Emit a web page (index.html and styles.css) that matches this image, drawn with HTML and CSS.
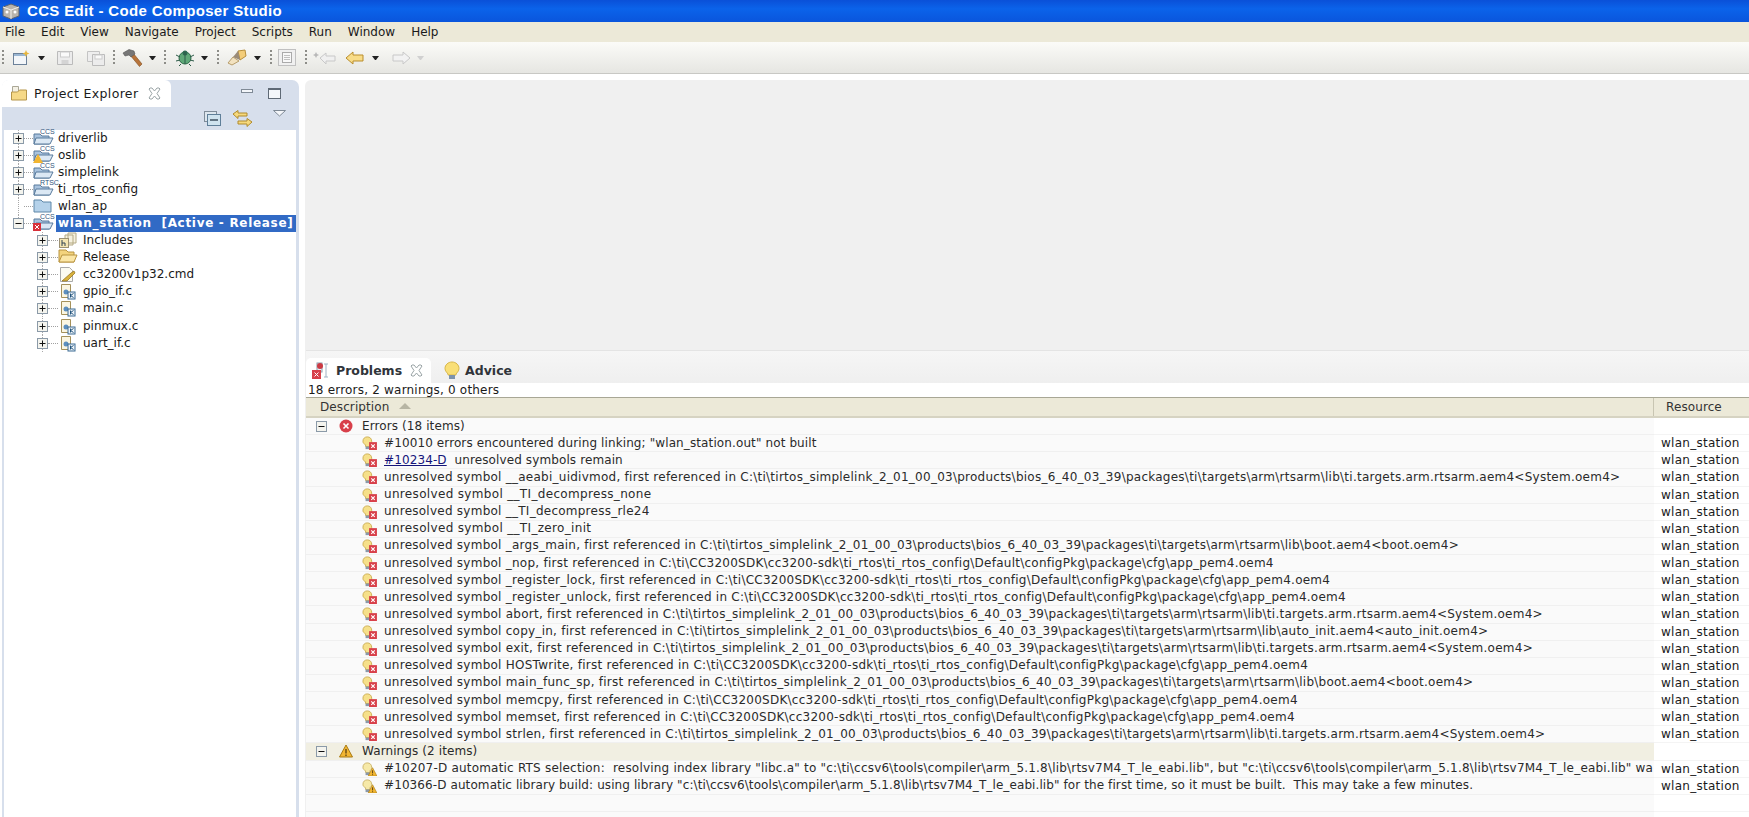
FILE: index.html
```html
<!DOCTYPE html>
<html lang="en">
<head>
<meta charset="utf-8">
<title>CCS Edit - Code Composer Studio</title>
<link rel="stylesheet" href="styles.css">
</head>
<body>
<svg class="defs" width="0" height="0" aria-hidden="true">
  <defs>
    <symbol id="bulb-err" viewBox="0 0 17 16">
      <path d="M6 1c3 0 5 2 5 5 0 2-1 3-2 4v2H4v-2C2 9 1 8 1 6c0-3 2-5 5-5z" fill="#f6e08a" stroke="#c9a94c"/>
      <rect x="4" y="12" width="5" height="3" fill="#8a98a8"/>
      <rect x="8" y="7" width="9" height="9" fill="#d8404a"/>
      <path d="M10.500 9.500l4 4m0-4l-4 4" stroke="#fff" stroke-width="1.300"/>
    </symbol>
    <symbol id="bulb-warn" viewBox="0 0 17 16">
      <path d="M6 1c3 0 5 2 5 5 0 2-1 3-2 4v2H4v-2C2 9 1 8 1 6c0-3 2-5 5-5z" fill="#f6e9a8" stroke="#c9b060"/>
      <rect x="4" y="12" width="5" height="3" fill="#8a98a8"/>
      <path d="M12 6.500l5 9.500H7z" fill="#f2b632" stroke="#a97a12" stroke-width=".7"/>
      <path d="M12 9.500v3.500m0 1v1" stroke="#4a3410" stroke-width="1"/>
    </symbol>
    <symbol id="toggle-plus" viewBox="0 0 11 11">
      <rect x=".5" y=".5" width="10" height="10" fill="#f4f4ee" stroke="#8b9aa8"/>
      <path d="M2.500 5.500h6M5.500 2.500v6" stroke="#111"/>
    </symbol>
    <symbol id="toggle-minus" viewBox="0 0 11 11">
      <rect x=".5" y=".5" width="10" height="10" fill="#f4f4ee" stroke="#8b9aa8"/>
      <path d="M2.500 5.500h6" stroke="#111"/>
    </symbol>
    <symbol id="project" viewBox="0 2 22 17">
      <path d="M1 6h6l2 2h7v8H1z" fill="#a9c3de" stroke="#587a9c"/>
      <path d="M3 10h17l-3 6H1z" fill="#dbe8f4" stroke="#587a9c"/>
    </symbol>
    <symbol id="file-c" viewBox="0 0 16 17">
      <path d="M1.500 1.500h9v13h-9z" fill="#fbf6e2" stroke="#a5915a"/>
      <circle cx="6" cy="9" r="2.500" fill="#5d8fbf"/>
      <rect x="8" y="9" width="7" height="7" fill="#eef3f8" stroke="#3a6b94"/>
      <path d="M10.500 10.500v4m3-4l-3 2 3 2" stroke="#24557d" fill="none"/>
    </symbol>
    <symbol id="close-x" viewBox="0 0 13 13">
      <path d="M2 1l2 0 2.500 3L9 1h2l1 1-3 4.500 3 4.500-1 1H9L6.500 9 4 12H2l-1-1 3-4.500L1 2z" fill="#fff" stroke="#9aa4a6"/>
    </symbol>
  </defs>
</svg>

<header class="titlebar">
  <svg class="app-icon" width="20" height="17" viewBox="0 0 20 17"><path d="M10 1l8 3v9l-8 3-8-3V4z" fill="#b9b4ac" stroke="#5b6270"/><path d="M2 4l8 3 8-3M10 7v9" stroke="#f2f0ea" fill="none"/><circle cx="6" cy="9" r="1.500" fill="#fff"/><circle cx="14" cy="9" r="1.500" fill="#fff"/></svg>
  <span>CCS Edit - Code Composer Studio</span>
</header>

<nav class="menubar">
  <span>File</span><span>Edit</span><span>View</span><span>Navigate</span><span>Project</span><span>Scripts</span><span>Run</span><span>Window</span><span>Help</span>
</nav>

<div class="toolbar">
  <i class="grip"></i>
  <svg class="ti t-new" width="18" height="16" viewBox="0 0 18 16"><rect x="1.500" y="3.500" width="13" height="11" fill="#f3f6f9" stroke="#6c8199"/><rect x="2" y="4" width="12" height="2" fill="#9ab7d3"/><path d="M14 0l1 2.500 2.500 1-2.500 1-1 2.500-1-2.500-2.500-1 2.500-1z" fill="#e7b63c"/></svg>
  <i class="caret c-new"></i>
  <svg class="ti t-save" width="18" height="16" viewBox="0 0 18 16"><path d="M1.500 1.500h15v13h-15z" fill="#ececec" stroke="#bbb"/><rect x="4.500" y="2" width="9" height="5" fill="#fafafa" stroke="#ccc"/><rect x="5.500" y="10" width="7" height="4" fill="#d4d4d4"/></svg>
  <svg class="ti t-saveall" width="20" height="16" viewBox="0 0 20 16"><path d="M1.500 1.500h12v10h-12z" fill="#eee" stroke="#c4c4c4"/><path d="M6.500 4.500h12v11h-12z" fill="#ececec" stroke="#bbb"/><rect x="9" y="5" width="7" height="4" fill="#fafafa" stroke="#ccc"/></svg>
  <i class="grip g-a"></i>
  <svg class="ti t-7" width="21" height="18" viewBox="0 0 21 18"><path d="M8 6l3-2 9 11-2.500 2.500z" fill="#b8743a" stroke="#7e4c20" stroke-width=".6"/><path d="M1 4l6-3.500 5 1.500 1 3-4 3-2-2-4 1z" fill="#777" stroke="#555" stroke-width=".6"/></svg>
  <i class="caret"></i>
  <i class="grip g-b"></i>
  <svg class="ti t-9" width="19" height="17" viewBox="0 0 19 17"><ellipse cx="10" cy="9" rx="6" ry="6" fill="#5fa878" stroke="#2d6b48"/><circle cx="10" cy="4" r="2.500" fill="#2e6a52"/><path d="M1 6l4 2M1 12l4-1M19 6l-4 2M19 12l-4-1M6 15l-2 2M14 15l2 2M10 3v12" stroke="#2d5b48" fill="none"/></svg>
  <i class="caret c-7"></i>
  <i class="grip g-c"></i>
  <svg class="ti t-7" width="21" height="17" viewBox="0 0 21 17"><path d="M12 2l7-1 1 6-6 4z" fill="#f3cd7a" stroke="#b78f3d"/><path d="M2 14l5-6 6 4-7 4z" fill="#f2e2c0" stroke="#b79d6a"/><path d="M7 8l5-6 2 9z" fill="#9a8b78"/></svg>
  <i class="caret c-7"></i>
  <i class="grip g-c"></i>
  <svg class="ti t-6" width="18" height="17" viewBox="0 0 18 17"><rect x=".5" y=".5" width="17" height="16" fill="#f0f0f0" stroke="#c0c0c0"/><rect x="4.500" y="3.500" width="9" height="10" fill="#f8f8f8" stroke="#aaa"/><path d="M6 6.500h6M6 8.500h6M6 10.500h6" stroke="#c0c0c0"/></svg>
  <i class="grip g-c"></i>
  <svg class="ti t-6" width="24" height="14" viewBox="0 0 24 14"><path d="M7 7l6-5v3h9v5h-9v3z" fill="#f0f0f0" stroke="#c8c8c8"/><path d="M3 1l1 2 2 1-2 1-1 2-1-2-2-1 2-1z" fill="#b8b8b8"/></svg>
  <svg class="ti t-8" width="20" height="14" viewBox="0 0 20 14"><path d="M1 7l7-6v3h10v6H8v3z" fill="#f8dc88" stroke="#b98d2c"/></svg>
  <i class="caret c-7"></i>
  <svg class="ti t-12" width="20" height="14" viewBox="0 0 20 14"><path d="M19 7l-7-6v3H2v6h10v3z" fill="#f2f2f2" stroke="#c8c8c8"/></svg>
  <i class="caret faint"></i>
</div>

<main class="workbench">
  <aside class="explorer">
    <div class="view-tabs">
      <div class="view-tab">
        <svg width="18" height="17" viewBox="0 0 18 17"><path d="M2.500 1.500h6v8h-6z" fill="#f4f1e6" stroke="#aaa796"/><path d="M1.500 7h6l2-2h7v10h-15z" fill="#f6d987" stroke="#b6964a"/></svg>
        <span>Project Explorer</span>
        <svg class="x" width="13" height="13"><use href="#close-x"/></svg>
      </div>
      <div class="win-btns">
        <i class="btn-min"></i>
        <i class="btn-max"></i>
      </div>
    </div>
    <div class="view-actions">
      <svg width="17" height="15" viewBox="0 0 17 15"><rect x=".5" y=".5" width="12" height="10" fill="#dde6ee" stroke="#7f8c99"/><rect x="3.500" y="3.500" width="13" height="11" fill="#cfe3ef" stroke="#5f7f99"/><path d="M6 9h8" stroke="#345" stroke-width="1.400"/></svg>
      <svg width="21" height="17" viewBox="0 0 21 17"><path d="M1 4l5-3.500V3h9v3H6v2.500z" fill="#f6d97d" stroke="#b08a2c"/><path d="M20 12l-5-3.500V11H6v3h9v2.500z" fill="#f6d97d" stroke="#b08a2c"/></svg>
      <svg class="dropdown" width="13" height="7" viewBox="0 0 13 7"><path d="M.5.500h12L6.500 6z" fill="#f4f6f9" stroke="#7f8a96"/></svg>
    </div>
    <div class="tree">
      <div class="tnode"><svg class="tg" width="11" height="11"><use href="#toggle-plus"/></svg><i class="dots"></i><span class="pj"><svg width="22" height="17"><use href="#project"/></svg><b class="ccs">CCS</b></span><span>driverlib</span></div>
      <div class="tnode"><svg class="tg" width="11" height="11"><use href="#toggle-plus"/></svg><i class="dots"></i><span class="pj"><svg width="22" height="17"><use href="#project"/></svg><b class="ccs">CCS</b><svg class="badge" width="10" height="9" viewBox="0 0 10 9"><path d="M5 0l5 9H0z" fill="#f2b632"/></svg></span><span>oslib</span></div>
      <div class="tnode"><svg class="tg" width="11" height="11"><use href="#toggle-plus"/></svg><i class="dots"></i><span class="pj"><svg width="22" height="17"><use href="#project"/></svg><b class="ccs">CCS</b></span><span>simplelink</span></div>
      <div class="tnode"><svg class="tg" width="11" height="11"><use href="#toggle-plus"/></svg><i class="dots"></i><span class="pj"><svg width="22" height="17"><use href="#project"/></svg><b class="ccs">RTSC</b></span><span>ti_rtos_config</span></div>
      <div class="tnode"><i class="tg-blank"></i><i class="dots"></i><span class="pj"><svg width="20" height="15" viewBox="0 0 20 15"><path d="M1 2h7l2 2h8v10H1z" fill="#b5d2ea" stroke="#5e87a8"/></svg></span><span>wlan_ap</span></div>
      <div class="tnode end"><svg class="tg" width="11" height="11"><use href="#toggle-minus"/></svg><i class="dots"></i><span class="pj"><svg width="22" height="17"><use href="#project"/></svg><b class="ccs">CCS</b><svg class="badge" width="8" height="8" viewBox="0 0 8 8"><rect width="8" height="8" fill="#d8303a"/><path d="M2 2l4 4m0-4L2 6" stroke="#fff"/></svg></span><span class="selected">wlan_station  [Active - Release]</span></div>
      <div class="tnode child"><svg class="tg" width="11" height="11"><use href="#toggle-plus"/></svg><i class="dots"></i><span class="pj"><svg width="19" height="16" viewBox="0 0 19 16"><path d="M10 1h8v10h-8zM7 3h8v10H7z" fill="#f6f1df" stroke="#b5aa85"/><rect x="1.500" y="6.500" width="9" height="9" fill="#f4e5b2" stroke="#9c9174"/><path d="M4 8v6m0-3h3v3" stroke="#345" fill="none"/></svg></span><span>Includes</span></div>
      <div class="tnode child"><svg class="tg" width="11" height="11"><use href="#toggle-plus"/></svg><i class="dots"></i><span class="pj"><svg width="20" height="14" viewBox="0 0 20 14"><path d="M1 1h7l2 2h6v10H1z" fill="#f3d37d" stroke="#b99440"/><path d="M4 6h15l-3 7H1z" fill="#fbe6a6" stroke="#b99440"/></svg></span><span>Release</span></div>
      <div class="tnode child"><svg class="tg" width="11" height="11"><use href="#toggle-plus"/></svg><i class="dots"></i><span class="pj"><svg width="19" height="17" viewBox="0 0 19 17"><path d="M2.500 1.500h9l3 3v11h-12z" fill="#fbfaf1" stroke="#aaa"/><path d="M4 15l9-8 3-2 1 2-8 8z" fill="#d9b23e" stroke="#8c6c16" stroke-width=".7"/></svg></span><span>cc3200v1p32.cmd</span></div>
      <div class="tnode child"><svg class="tg" width="11" height="11"><use href="#toggle-plus"/></svg><i class="dots"></i><span class="pj fc"><svg width="16" height="17"><use href="#file-c"/></svg></span><span>gpio_if.c</span></div>
      <div class="tnode child"><svg class="tg" width="11" height="11"><use href="#toggle-plus"/></svg><i class="dots"></i><span class="pj fc"><svg width="16" height="17"><use href="#file-c"/></svg></span><span>main.c</span></div>
      <div class="tnode child"><svg class="tg" width="11" height="11"><use href="#toggle-plus"/></svg><i class="dots"></i><span class="pj fc"><svg width="16" height="17"><use href="#file-c"/></svg></span><span>pinmux.c</span></div>
      <div class="tnode child"><svg class="tg" width="11" height="11"><use href="#toggle-plus"/></svg><i class="dots"></i><span class="pj fc"><svg width="16" height="17"><use href="#file-c"/></svg></span><span>uart_if.c</span></div>
    </div>
  </aside>

  <section class="right">
    <div class="editor"></div>
    <div class="problems">
      <div class="ptabs">
        <div class="ptab active">
          <svg width="20" height="18" viewBox="0 0 20 18"><rect x="6" y="1" width="5" height="9" fill="#e8eef4" stroke="#8c9aaa"/><circle cx="9" cy="4" r="3" fill="#cc3a44"/><path d="M13 2h4M15 2v13M13 15h4" stroke="#9fb2c4" fill="none"/><rect x="1" y="8" width="9" height="9" fill="#d8404a"/><path d="M3.500 10.500l4 4m0-4l-4 4" stroke="#fff"/></svg>
          <b>Problems</b>
          <svg class="x" width="13" height="13"><use href="#close-x"/></svg>
        </div>
        <div class="ptab next">
          <svg width="16" height="19" viewBox="0 0 16 19"><path d="M8 1c4 0 7 3 7 6.500 0 2.500-2 4-3 5.500v1H4v-1C3 11.500 1 10 1 7.500 1 4 4 1 8 1z" fill="#f9df77" stroke="#d8b647"/><rect x="5" y="14" width="6" height="4" fill="#7d93ab"/></svg>
          <b>Advice</b>
        </div>
      </div>
      <div class="summary">18 errors, 2 warnings, 0 others</div>
      <div class="thead">
        <div class="th-desc">Description <svg width="12" height="6" viewBox="0 0 12 6"><path d="M6 0l6 6H0z" fill="#b7b5a4"/></svg></div>
        <div class="th-res">Resource</div>
      </div>
      <div class="tbody">
        <div class="row group"><div class="desc"><svg class="tg" width="11" height="11"><use href="#toggle-minus"/></svg><svg class="gi" width="14" height="14" viewBox="0 0 14 14"><circle cx="7" cy="7" r="6.500" fill="#d8404a"/><path d="M4.500 4.500l5 5m0-5l-5 5" stroke="#fff" stroke-width="1.600"/></svg><span>Errors (18 items)</span></div><div class="res"></div></div>
        <div class="row tight"><div class="desc"><svg class="bi" width="17" height="16"><use href="#bulb-err"/></svg><span>#10010 errors encountered during linking; "wlan_station.out" not built</span></div><div class="res">wlan_station</div></div>
        <div class="row tight"><div class="desc"><svg class="bi" width="17" height="16"><use href="#bulb-err"/></svg><span><a class="lnk">#10234-D</a>  unresolved symbols remain</span></div><div class="res">wlan_station</div></div>
        <div class="row"><div class="desc"><svg class="bi" width="17" height="16"><use href="#bulb-err"/></svg><span>unresolved symbol __aeabi_uidivmod, first referenced in C:\ti\tirtos_simplelink_2_01_00_03\products\bios_6_40_03_39\packages\ti\targets\arm\rtsarm\lib\ti.targets.arm.rtsarm.aem4&lt;System.oem4&gt;</span></div><div class="res">wlan_station</div></div>
        <div class="row loose"><div class="desc"><svg class="bi" width="17" height="16"><use href="#bulb-err"/></svg><span>unresolved symbol __TI_decompress_none</span></div><div class="res">wlan_station</div></div>
        <div class="row"><div class="desc"><svg class="bi" width="17" height="16"><use href="#bulb-err"/></svg><span>unresolved symbol __TI_decompress_rle24</span></div><div class="res">wlan_station</div></div>
        <div class="row loose"><div class="desc"><svg class="bi" width="17" height="16"><use href="#bulb-err"/></svg><span>unresolved symbol __TI_zero_init</span></div><div class="res">wlan_station</div></div>
        <div class="row"><div class="desc"><svg class="bi" width="17" height="16"><use href="#bulb-err"/></svg><span>unresolved symbol _args_main, first referenced in C:\ti\tirtos_simplelink_2_01_00_03\products\bios_6_40_03_39\packages\ti\targets\arm\rtsarm\lib\boot.aem4&lt;boot.oem4&gt;</span></div><div class="res">wlan_station</div></div>
        <div class="row"><div class="desc"><svg class="bi" width="17" height="16"><use href="#bulb-err"/></svg><span>unresolved symbol _nop, first referenced in C:\ti\CC3200SDK\cc3200-sdk\ti_rtos\ti_rtos_config\Default\configPkg\package\cfg\app_pem4.oem4</span></div><div class="res">wlan_station</div></div>
        <div class="row"><div class="desc"><svg class="bi" width="17" height="16"><use href="#bulb-err"/></svg><span>unresolved symbol _register_lock, first referenced in C:\ti\CC3200SDK\cc3200-sdk\ti_rtos\ti_rtos_config\Default\configPkg\package\cfg\app_pem4.oem4</span></div><div class="res">wlan_station</div></div>
        <div class="row"><div class="desc"><svg class="bi" width="17" height="16"><use href="#bulb-err"/></svg><span>unresolved symbol _register_unlock, first referenced in C:\ti\CC3200SDK\cc3200-sdk\ti_rtos\ti_rtos_config\Default\configPkg\package\cfg\app_pem4.oem4</span></div><div class="res">wlan_station</div></div>
        <div class="row"><div class="desc"><svg class="bi" width="17" height="16"><use href="#bulb-err"/></svg><span>unresolved symbol abort, first referenced in C:\ti\tirtos_simplelink_2_01_00_03\products\bios_6_40_03_39\packages\ti\targets\arm\rtsarm\lib\ti.targets.arm.rtsarm.aem4&lt;System.oem4&gt;</span></div><div class="res">wlan_station</div></div>
        <div class="row"><div class="desc"><svg class="bi" width="17" height="16"><use href="#bulb-err"/></svg><span>unresolved symbol copy_in, first referenced in C:\ti\tirtos_simplelink_2_01_00_03\products\bios_6_40_03_39\packages\ti\targets\arm\rtsarm\lib\auto_init.aem4&lt;auto_init.oem4&gt;</span></div><div class="res">wlan_station</div></div>
        <div class="row"><div class="desc"><svg class="bi" width="17" height="16"><use href="#bulb-err"/></svg><span>unresolved symbol exit, first referenced in C:\ti\tirtos_simplelink_2_01_00_03\products\bios_6_40_03_39\packages\ti\targets\arm\rtsarm\lib\ti.targets.arm.rtsarm.aem4&lt;System.oem4&gt;</span></div><div class="res">wlan_station</div></div>
        <div class="row"><div class="desc"><svg class="bi" width="17" height="16"><use href="#bulb-err"/></svg><span>unresolved symbol HOSTwrite, first referenced in C:\ti\CC3200SDK\cc3200-sdk\ti_rtos\ti_rtos_config\Default\configPkg\package\cfg\app_pem4.oem4</span></div><div class="res">wlan_station</div></div>
        <div class="row"><div class="desc"><svg class="bi" width="17" height="16"><use href="#bulb-err"/></svg><span>unresolved symbol main_func_sp, first referenced in C:\ti\tirtos_simplelink_2_01_00_03\products\bios_6_40_03_39\packages\ti\targets\arm\rtsarm\lib\boot.aem4&lt;boot.oem4&gt;</span></div><div class="res">wlan_station</div></div>
        <div class="row"><div class="desc"><svg class="bi" width="17" height="16"><use href="#bulb-err"/></svg><span>unresolved symbol memcpy, first referenced in C:\ti\CC3200SDK\cc3200-sdk\ti_rtos\ti_rtos_config\Default\configPkg\package\cfg\app_pem4.oem4</span></div><div class="res">wlan_station</div></div>
        <div class="row"><div class="desc"><svg class="bi" width="17" height="16"><use href="#bulb-err"/></svg><span>unresolved symbol memset, first referenced in C:\ti\CC3200SDK\cc3200-sdk\ti_rtos\ti_rtos_config\Default\configPkg\package\cfg\app_pem4.oem4</span></div><div class="res">wlan_station</div></div>
        <div class="row"><div class="desc"><svg class="bi" width="17" height="16"><use href="#bulb-err"/></svg><span>unresolved symbol strlen, first referenced in C:\ti\tirtos_simplelink_2_01_00_03\products\bios_6_40_03_39\packages\ti\targets\arm\rtsarm\lib\ti.targets.arm.rtsarm.aem4&lt;System.oem4&gt;</span></div><div class="res">wlan_station</div></div>
        <div class="row group warn"><div class="desc"><svg class="tg" width="11" height="11"><use href="#toggle-minus"/></svg><svg class="gi" width="14" height="14" viewBox="0 0 14 14"><path d="M7 1l6.500 12H.5z" fill="#f2b632" stroke="#a97a12"/><path d="M7 5v4.500m0 1v1.500" stroke="#4a3410" stroke-width="1.200"/></svg><span>Warnings (2 items)</span></div><div class="res"></div></div>
        <div class="row w-a"><div class="desc"><svg class="bi" width="17" height="16"><use href="#bulb-warn"/></svg><span>#10207-D automatic RTS selection:  resolving index library "libc.a" to "c:\ti\ccsv6\tools\compiler\arm_5.1.8\lib\rtsv7M4_T_le_eabi.lib", but "c:\ti\ccsv6\tools\compiler\arm_5.1.8\lib\rtsv7M4_T_le_eabi.lib" wa</span></div><div class="res">wlan_station</div></div>
        <div class="row w-b"><div class="desc"><svg class="bi" width="17" height="16"><use href="#bulb-warn"/></svg><span>#10366-D automatic library build: using library "c:\ti\ccsv6\tools\compiler\arm_5.1.8\lib\rtsv7M4_T_le_eabi.lib" for the first time, so it must be built.  This may take a few minutes.</span></div><div class="res">wlan_station</div></div>
        <div class="row"><div class="desc"></div><div class="res"></div></div>
        <div class="row"><div class="desc"></div><div class="res"></div></div>
      </div>
    </div>
  </section>
</main>
</body>
</html>
```
FILE: styles.css
```css
* { box-sizing: border-box; }
html, body { margin: 0; height: 817px; overflow: hidden; }
body {
  display: flex;
  flex-direction: column;
  background: #fff;
  color: #1a1a1a;
  font: 12px/17px "DejaVu Sans", "Liberation Sans", sans-serif;
  width: 1749px;
}
.defs { position: absolute; }

.titlebar {
  height: 22px;
  flex: none;
  display: flex;
  align-items: center;
  gap: 6px;
  padding-left: 1px;
  background: linear-gradient(#0a50d8 0%, #0b63ea 40%, #0a55dc 100%);
  color: #fff;
  font: bold 15px/22px "Liberation Sans", sans-serif;
  letter-spacing: .35px;
}
.menubar {
  height: 20px;
  flex: none;
  display: flex;
  align-items: center;
  gap: 16px;
  padding-left: 5px;
  background: #ece9d8;
  font-size: 12px;
}
.toolbar {
  height: 32px;
  flex: none;
  display: flex;
  align-items: center;
  padding-left: 2px;
  background: linear-gradient(#fbfbf8, #e6e6e2);
  border-bottom: 1px solid #c8c8c4;
}
.grip {
  width: 2px;
  height: 16px;
  flex: none;
  background: repeating-linear-gradient(#8d8d88 0 2px, transparent 2px 4px);
}
.ti { flex: none; }
.t-new { margin-left: 8px; }
.t-save { margin-left: 11px; }
.t-saveall { margin-left: 12px; }
.t-6 { margin-left: 6px; }
.t-7 { margin-left: 7px; }
.t-8 { margin-left: 8px; }
.t-9 { margin-left: 9px; }
.t-12 { margin-left: 12px; }
.g-a { margin-left: 7px; }
.g-b { margin-left: 8px; }
.g-c { margin-left: 9px; }
.caret {
  width: 7px;
  height: 0;
  flex: none;
  margin-left: 6px;
  border: 3.500px solid transparent;
  border-top: 4px solid #222;
  border-bottom: 0;
}
.c-new { margin-left: 8px; }
.c-7 { margin-left: 7px; }
.caret.faint { border-top-color: #d0d0d0; }

.workbench {
  flex: 1;
  min-height: 0;
  display: flex;
  padding: 6px 0 0 2px;
  gap: 6px;
}
.explorer {
  width: 297px;
  flex: none;
  display: flex;
  flex-direction: column;
  background: #d7dfec;
  border-radius: 7px 7px 0 0;
  padding: 0 3px 0 2px;
}
.view-tabs {
  height: 27px;
  flex: none;
  margin: 0 -3px 0 -2px;
  display: flex;
  justify-content: space-between;
}
.view-tab {
  width: 169px;
  display: flex;
  align-items: center;
  gap: 6px;
  padding-left: 8px;
  background: #fff;
  border-radius: 6px 6px 0 0;
  font-size: 12.500px;
  letter-spacing: .35px;
}
.view-tab .x { margin-left: 4px; }
.win-btns {
  display: flex;
  align-items: flex-start;
  gap: 15px;
  padding: 8px 18px 0 0;
}
.btn-min { width: 12px; height: 4px; margin-top: 1px; background: #f3f6fa; border: 1px solid #7f8a96; }
.btn-max { width: 13px; height: 11px; background: #f3f6fa; border: 1px solid #5f6a76; border-top-width: 2px; }
.view-actions {
  height: 22.500px;
  flex: none;
  display: flex;
  align-items: center;
  padding-left: 200px;
  gap: 11px;
}
.view-actions .dropdown { margin: -9px 0 0 9px; }
.tree {
  flex: 1;
  background: #fff;
  padding-top: 0;
}
.tnode {
  height: 17.100px;
  display: flex;
  align-items: center;
  padding-left: 9px;
  white-space: pre;
  background: repeating-linear-gradient(#a8a8a8 0 1px, transparent 1px 2px) 14px 0 / 1px 100% no-repeat;
}
.tnode.end { background: repeating-linear-gradient(#a8a8a8 0 1px, transparent 1px 2px) 14px 0 / 1px 50% no-repeat; }
.tnode.child {
  padding-left: 33px;
  background: repeating-linear-gradient(#a8a8a8 0 1px, transparent 1px 2px) 38px 0 / 1px 100% no-repeat;
}
.tg { flex: none; }
.tg-blank { width: 11px; flex: none; }
.dots { width: 9px; height: 1px; flex: none; border-top: 1px dotted #a0a0a0; }
.child .dots { width: 10px; }
.pj {
  position: relative;
  width: 25px;
  height: 17px;
  flex: none;
  display: block;
}
.pj svg { display: block; }
.fc { padding-left: 2px; }
.ccs {
  position: absolute;
  left: 7px;
  top: -2px;
  font: 7px/7px "Liberation Sans", sans-serif;
  color: #31567c;
}
.pj .badge { position: absolute; left: 0; bottom: 1px; }
.selected {
  flex: 1;
  background: #316ac5;
  color: #fff;
  font-weight: bold;
  padding: 0 2px;
  margin-left: -2px;
  letter-spacing: .69px;
}

.right {
  flex: 1;
  min-width: 0;
  display: flex;
  flex-direction: column;
}
.editor {
  height: 270px;
  flex: none;
  background: #f0f0f0;
  border-radius: 6px 0 0 0;
}
.problems {
  flex: 1;
  min-height: 0;
  border-left: 1px solid #f0f0f0;
  background: #fff;
  overflow: hidden;
}
.ptabs {
  height: 33px;
  display: flex;
  align-items: flex-end;
  background: linear-gradient(#f6f6f6, #efefef);
  border-top: 1px solid #e4e4e4;
}
.ptab {
  height: 25px;
  display: flex;
  align-items: center;
  gap: 5px;
  padding: 0 8px 0 5px;
  font-size: 12.500px;
}
.ptab.next { margin-left: 8px; }
.ptab b { font-weight: bold; color: #30343a; }
.ptab.active { background: #fff; border-radius: 5px 5px 0 0; }
.ptab .x { margin-left: 3px; }
.summary {
  height: 14px;
  line-height: 15px;
  padding-left: 2px;
  border-bottom: 1px solid #a8a795;
  letter-spacing: .2px;
  box-sizing: content-box;
}
.thead {
  height: 20px;
  display: flex;
  background: #ece9d8;
  border-bottom: 2px solid #d6d3c2;
  letter-spacing: .1px;
}
.th-desc {
  width: 1348px;
  padding-left: 14px;
  line-height: 19px;
  color: #333;
  border-right: 1px solid #c8c5b2;
}
.th-desc svg { margin-left: 6px; vertical-align: 2px; }
.th-res { padding-left: 12px; line-height: 19px; color: #333; }
.row {
  height: 17.140px;
  display: flex;
  letter-spacing: .25px;
}
.row .res { letter-spacing: .27px; }
.row.tight { letter-spacing: .11px; }
.row.loose { letter-spacing: .33px; }
.row.w-a { letter-spacing: .2px; }
.row.w-b { letter-spacing: .095px; }
.row.group { letter-spacing: .1px; }
.desc {
  width: 1348px;
  flex: none;
  display: flex;
  align-items: center;
  padding-left: 56px;
  gap: 5px;
  white-space: pre;
  overflow: hidden;
  background: #fafafa;
  border-bottom: 1px solid #f0f0f0;
  color: #2a2a2a;
}
.desc span { flex: none; }
.bi { flex: none; width: 15px; height: 14px; margin-right: 2px; }
.group .desc { padding-left: 10px; gap: 12px; }
.group .gi { margin-right: -3px; flex: none; }
.warn .desc { background: #f1efe2; }
.res {
  flex: 1;
  padding-left: 7px;
  border-bottom: 1px solid #f4f4f4;
}
.lnk { color: #15157a; text-decoration: underline; }
```
